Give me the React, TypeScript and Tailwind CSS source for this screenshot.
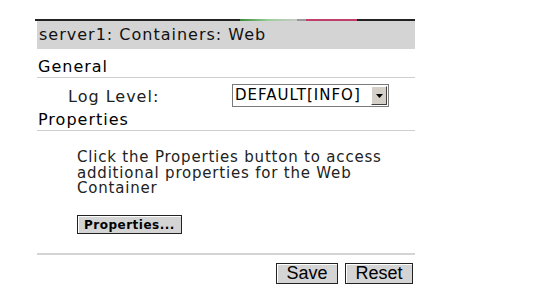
import React from "react"

const font = { fontFamily: '"DejaVu Sans", Verdana, sans-serif' }

export default function App() {
  return (
    <div className="w-[534px] h-[291px] bg-white overflow-hidden" style={font}>
      <div className="ml-[37px] w-[378px] pt-[19px]">
        {/* residue of the banner above */}
        <div className="flex h-[2px] -ml-[2px] w-[380px]">
          <div className="w-[205px] bg-[#222]" />
          <div className="w-[57px] bg-gradient-to-r from-[#3a8a3a] via-[#9ad09a] to-[#c8c8c8]" />
          <div className="w-[9px] bg-[#999]" />
          <div className="w-[51px] bg-[#c0406a]" />
          <div className="flex-1 bg-[#222]" />
        </div>
        <div className="h-[28px] bg-[#d4d4d4] flex items-center pl-[2px] text-[16px] tracking-[1px] text-[#111]">
          server1: Containers: Web
        </div>

        <div className="mt-[8px] text-[16px] tracking-[1px] leading-[20px] pl-[1px] text-black">General</div>
        <div className="h-px bg-[#cfcfcf]" />

        <div className="flex items-center h-[27px] mt-[4px]">
          <div className="w-[195px] pl-[31px] pt-[3px] text-[16px] tracking-[1px] text-[#222]">Log Level:</div>
          <div className="flex items-stretch h-[23px] w-[157px] border border-[#7a7a7a] bg-white">
            <div className="flex-1 flex items-center pl-[2px] text-[15px] tracking-[1px] text-black">DEFAULT[INFO]</div>
            <div className="w-[16px] m-px bg-[#d4d0c8] border border-t-white border-l-white border-r-[#404040] border-b-[#404040] flex items-center justify-center">
              <svg width="7" height="4" viewBox="0 0 7 4">
                <path d="M0 0h7L3.5 4z" fill="#000" />
              </svg>
            </div>
          </div>
        </div>

        <div className="mt-[1px] text-[16px] tracking-[1px] leading-[20px] pl-[1px] text-black">Properties</div>
        <div className="h-px bg-[#cfcfcf]" />

        <div className="pl-[40px] pt-[19px] pr-[20px] text-[15px] tracking-[0.8px] leading-[15.5px] text-[#222]">
          Click the Properties button to access additional properties for the Web Container
        </div>
        <div className="pl-[40px] mt-[15px]">
          <button className="h-[19px] px-[6px] bg-[#d4d4d4] border border-[#222] text-[12px] tracking-[0.5px] font-bold leading-none text-black shadow-[inset_1px_1px_0_#fff]">
            Properties...
          </button>
        </div>

        <div className="h-[2px] bg-[#d4d4d4] mt-[17px]" />

        <div className="flex justify-end gap-[7px] mt-[8px] pr-[2px]" style={{ fontFamily: '"Liberation Sans", Arial, sans-serif' }}>
          <button className="h-[21px] w-[62px] bg-[#d4d4d4] border border-[#222] text-[18px] leading-none text-black shadow-[inset_1px_1px_0_#fff]">
            Save
          </button>
          <button className="h-[21px] w-[68px] bg-[#d4d4d4] border border-[#222] text-[18px] leading-none text-black shadow-[inset_1px_1px_0_#fff]">
            Reset
          </button>
        </div>
      </div>
    </div>
  )
}
